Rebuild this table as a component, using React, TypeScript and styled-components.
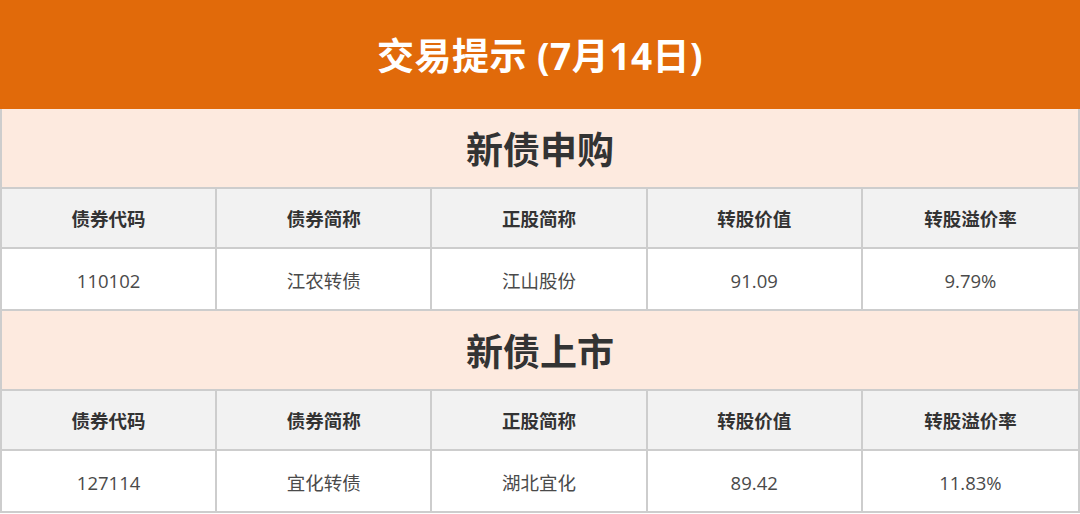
import React from 'react';
import styled, { createGlobalStyle } from 'styled-components';

const GlobalStyle = createGlobalStyle`
  html, body {
    margin: 0;
    padding: 0;
    background: #ffffff;
  }
  body {
    font-family: 'Open Sans', 'Noto Sans CJK SC', sans-serif;
  }
`;

const columns = ['债券代码', '债券简称', '正股简称', '转股价值', '转股溢价率'];

const sections = [
  { title: '新债申购', row: ['110102', '江农转债', '江山股份', '91.09', '9.79%'] },
  { title: '新债上市', row: ['127114', '宜化转债', '湖北宜化', '89.42', '11.83%'] },
];

const App = () => (
  <>
    <GlobalStyle />
    <Page>
      <Banner>交易提示 (7月14日)</Banner>
      <Table>
        {sections.map((section) => (
          <Section key={section.title}>
            <Band>{section.title}</Band>
            <Grid>
              {columns.map((c) => (
                <HeadCell key={c}>{c}</HeadCell>
              ))}
              {section.row.map((v, i) => (
                <DataCell key={i}>{v}</DataCell>
              ))}
            </Grid>
          </Section>
        ))}
      </Table>
    </Page>
  </>
);
export default App;

const Page = styled.div`
  width: 1080px;
  display: flex;
  flex-direction: column;
`;
const Banner = styled.div`
  height: 109px;
  padding-bottom: 2px;
  box-sizing: border-box;
  background: #e16a0a;
  color: #ffffff;
  display: flex;
  align-items: center;
  justify-content: center;
  font-family: 'Open Sans', 'Noto Sans CJK SC', sans-serif;
  font-size: 37px;
  font-weight: 700;
  letter-spacing: 0.5px;
`;
const Table = styled.div`
  display: flex;
  flex-direction: column;
  border-left: 2px solid #cdcdcd;
  border-right: 2px solid #cdcdcd;
`;
const Section = styled.div`
  display: flex;
  flex-direction: column;
`;
const Band = styled.div`
  height: 80px;
  box-sizing: border-box;
  background: #fdeadf;
  border-bottom: 2px solid #cdcdcd;
  display: flex;
  align-items: center;
  justify-content: center;
  color: #333333;
  font-family: 'Noto Sans CJK SC', sans-serif;
  font-size: 37px;
  font-weight: 700;
`;
const Grid = styled.div`
  display: grid;
  grid-template-columns: repeat(5, 1fr);
`;
const Cell = styled.div`
  box-sizing: border-box;
  display: flex;
  align-items: center;
  justify-content: center;
  border-bottom: 2px solid #cdcdcd;
  border-right: 2px solid #cdcdcd;
  &:nth-child(5n) {
    border-right: none;
  }
`;
const HeadCell = styled(Cell)`
  height: 60px;
  background: #f2f2f2;
  color: #333333;
  font-family: 'Noto Sans CJK SC', sans-serif;
  font-size: 18.5px;
  font-weight: 700;
`;
const DataCell = styled(Cell)`
  height: 62px;
  padding-top: 2px;
  background: #ffffff;
  color: #4a4a4a;
  font-family: 'Open Sans', 'Noto Sans CJK SC', sans-serif;
  font-size: 18.5px;
  font-weight: 400;
`;
